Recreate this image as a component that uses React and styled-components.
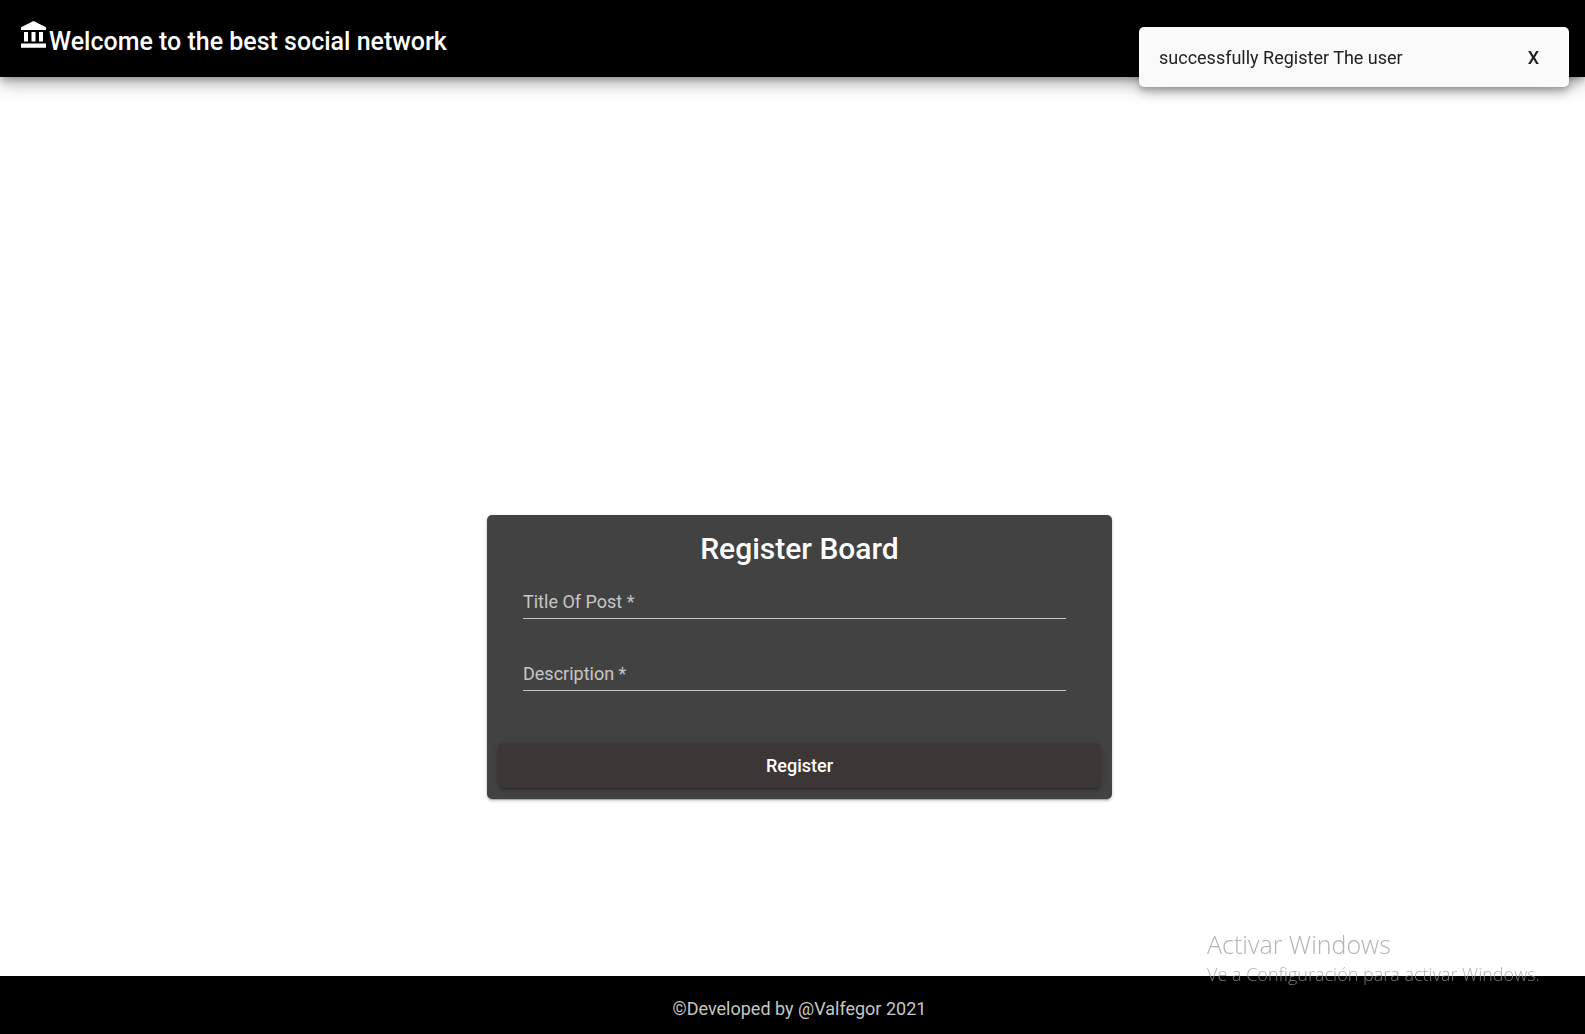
import React, { useState } from "react";
import styled, { createGlobalStyle } from "styled-components";

const GlobalStyle = createGlobalStyle`
  *, *::before, *::after { box-sizing: border-box; }
  body {
    margin: 0;
    background: #fff;
    font-family: Roboto, "Liberation Sans", sans-serif;
    font-size: 18px;
    line-height: 24px;
  }
`;

const Page = styled.div`
  display: flex;
  flex-direction: column;
  min-height: 100vh;
`;

const Header = styled.header`
  display: flex;
  align-items: flex-start;
  padding: 20px 18px 18px;
  background: #000;
  color: #fff;
  box-shadow: 0 3px 6px -1px rgba(0, 0, 0, 0.2), 0 5px 12px rgba(0, 0, 0, 0.2),
    0 6px 20px rgba(0, 0, 0, 0.2);
`;

const BrandIcon = styled.svg`
  flex: none;
  width: 31px;
  height: 31px;
`;

const Brand = styled.h1`
  margin: 0;
  padding-top: 5px;
  font-size: 25px;
  line-height: 34px;
  font-weight: 500;
`;

const Main = styled.main`
  flex: 1;
  display: flex;
  justify-content: center;
  align-items: flex-end;
  padding: 24px 24px 177px 38px;
`;

const Card = styled.form`
  width: 100%;
  max-width: 625px;
  padding: 12px 11px 11px;
  border-radius: 5px;
  background: #424242;
  color: #fff;
  box-shadow: 0 3px 1px -2px rgba(0, 0, 0, 0.2), 0 2px 3px rgba(0, 0, 0, 0.14),
    0 1px 4px rgba(0, 0, 0, 0.12);
`;

const CardTitle = styled.h2`
  margin: 0;
  font-size: 30px;
  line-height: 44px;
  font-weight: 500;
  text-align: center;
`;

const Fields = styled.div`
  display: grid;
  gap: 24px;
  padding: 0 35px 52px 25px;
`;

const FieldBox = styled.div`
  display: grid;
  height: 48px;
  border-bottom: 1px solid #c6c6c6;
`;

const FieldLabel = styled.label`
  grid-area: 1 / 1;
  align-self: end;
  padding-bottom: 4px;
  color: #c6c6c6;
  visibility: ${(p) => (p.$filled ? "hidden" : "visible")};
`;

const FieldInput = styled.input`
  grid-area: 1 / 1;
  align-self: end;
  width: 100%;
  height: 32px;
  padding: 0 0 4px;
  border: 0;
  outline: 0;
  background: transparent;
  color: #fff;
  font: inherit;
`;

const SubmitButton = styled.button`
  display: block;
  width: 100%;
  height: 45px;
  border: 0;
  border-radius: 5px;
  background: #3c3636;
  color: #fff;
  font: inherit;
  font-weight: 500;
  cursor: pointer;
  box-shadow: 0 3px 1px -2px rgba(0, 0, 0, 0.2), 0 2px 3px rgba(0, 0, 0, 0.14),
    0 1px 6px rgba(0, 0, 0, 0.12);
`;

const Footer = styled.footer`
  padding: 21px 24px 13px 38px;
  background: #000;
  color: #c6c6c6;
  text-align: center;
`;

const Toast = styled.div`
  position: fixed;
  top: 27px;
  right: 16px;
  display: flex;
  justify-content: space-between;
  align-items: center;
  width: 430px;
  max-width: calc(100vw - 32px);
  height: 60px;
  padding: 2px 20px 0;
  border-radius: 5px;
  background: #fafafa;
  color: #212121;
  box-shadow: 0 4px 6px -1px rgba(0, 0, 0, 0.2), 0 7px 12px rgba(0, 0, 0, 0.14),
    0 1px 22px rgba(0, 0, 0, 0.12);
`;

const ToastClose = styled.button`
  padding: 8px 10px;
  border: 0;
  background: transparent;
  color: inherit;
  font: inherit;
  font-weight: 500;
  cursor: pointer;
`;

const Watermark = styled.aside`
  position: fixed;
  right: 49px;
  bottom: 47px;
  width: 329px;
  color: rgba(155, 155, 155, 0.76);
  font-family: "Segoe UI", "Open Sans", "Noto Sans", sans-serif;
  font-weight: 300;
  white-space: nowrap;
  pointer-events: none;
`;

const WatermarkTitle = styled.p`
  margin: 0;
  font-size: 25px;
  line-height: 34px;
`;

const WatermarkText = styled.p`
  margin: 0;
  font-size: 18px;
  line-height: 26px;
`;

function BankIcon() {
  return (
    <BrandIcon viewBox="0 0 31 31" fill="currentColor" aria-hidden="true">
      <path d="M15.500 1L28 7.200V10H3V7.200L15.500 1zM6 12h4v9.500H6V12zM13.500 12h4v9.500h-4V12zM21 12h4v9.500h-4V12zM3 23.500h25v4.200H3v-4.200z" />
    </BrandIcon>
  );
}

function Field({ id, label }) {
  const [value, setValue] = useState("");
  return (
    <FieldBox>
      <FieldLabel htmlFor={id} $filled={value !== ""}>
        {label} *
      </FieldLabel>
      <FieldInput
        id={id}
        type="text"
        required
        value={value}
        onChange={(e) => setValue(e.target.value)}
      />
    </FieldBox>
  );
}

export default function App() {
  const [toastOpen, setToastOpen] = useState(true);
  return (
    <>
      <GlobalStyle />
      <Page>
        <Header>
          <BankIcon />
          <Brand>Welcome to the best social network</Brand>
        </Header>
        <Main>
          <Card onSubmit={(e) => e.preventDefault()}>
            <CardTitle>Register Board</CardTitle>
            <Fields>
              <Field id="title" label="Title Of Post" />
              <Field id="description" label="Description" />
            </Fields>
            <SubmitButton type="submit">Register</SubmitButton>
          </Card>
        </Main>
        <Footer>©Developed by @Valfegor 2021</Footer>
      </Page>
      {toastOpen && (
        <Toast role="status">
          <span>successfully Register The user</span>
          <ToastClose type="button" onClick={() => setToastOpen(false)}>
            X
          </ToastClose>
        </Toast>
      )}
      <Watermark>
        <WatermarkTitle>Activar Windows</WatermarkTitle>
        <WatermarkText>Ve a Configuración para activar Windows.</WatermarkText>
      </Watermark>
    </>
  );
}
